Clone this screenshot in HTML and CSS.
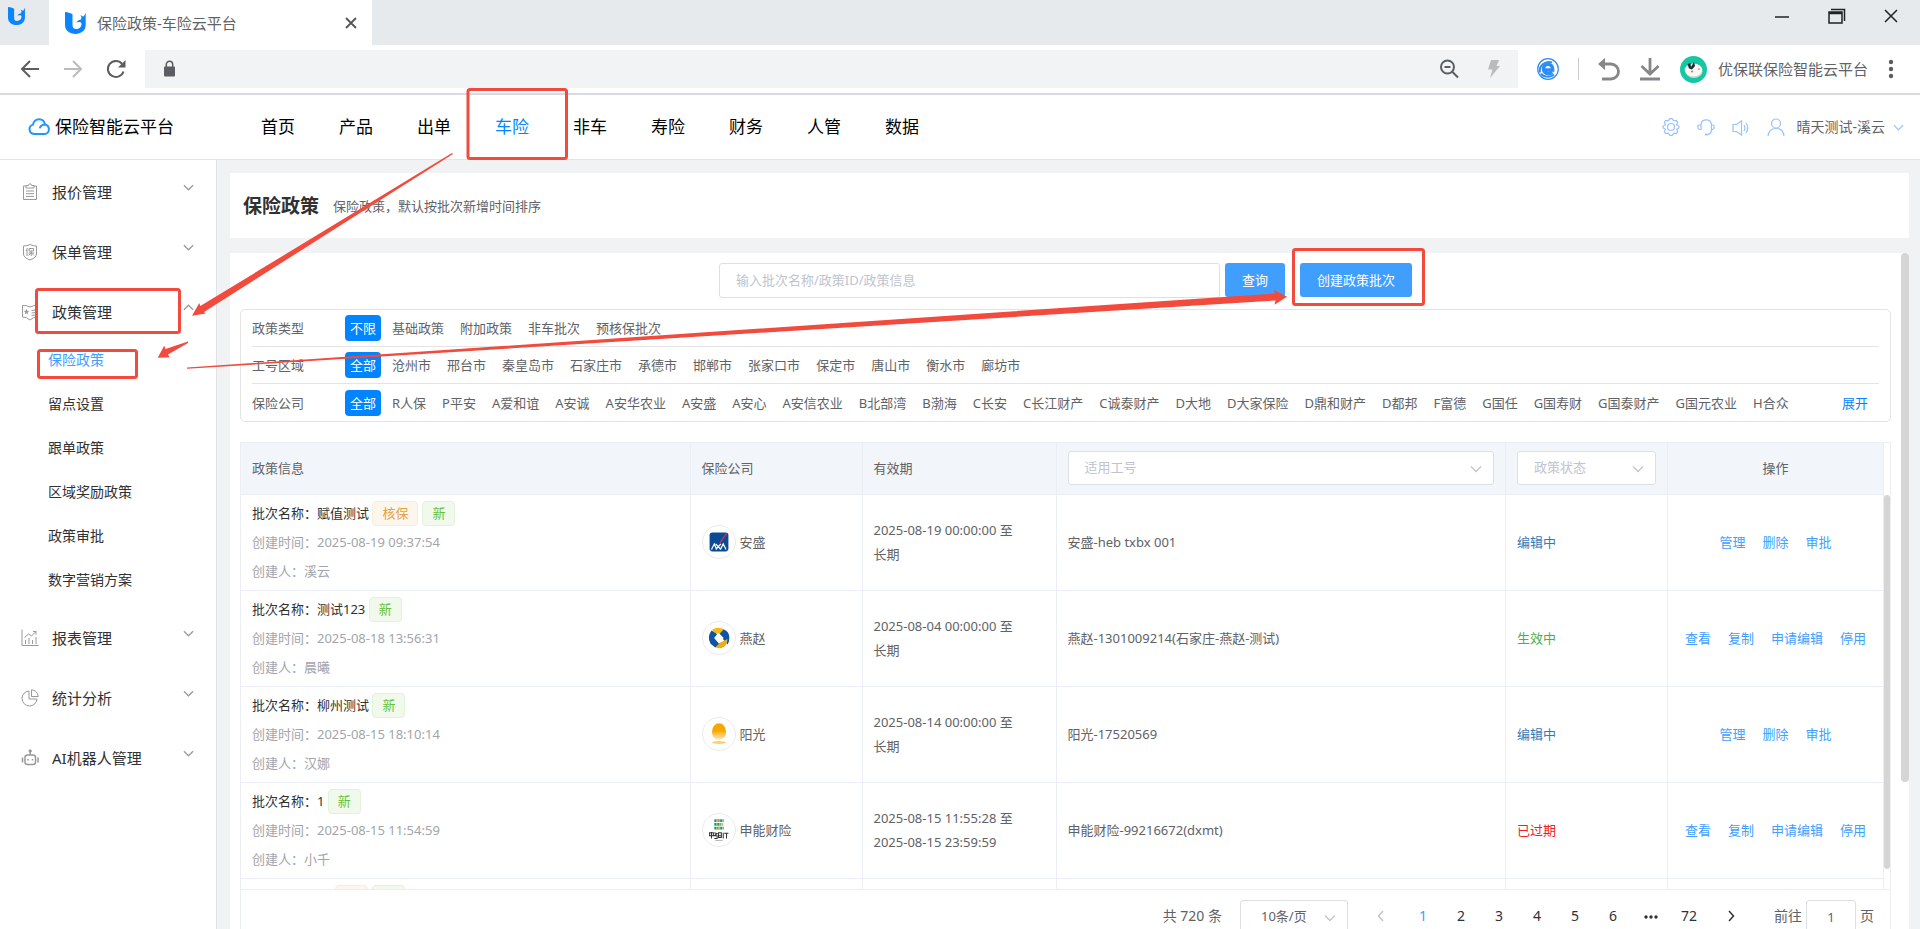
FILE: index.html
```html
<!DOCTYPE html>
<html lang="zh-CN">
  <head>
    <meta charset="UTF-8" />
    <meta name="viewport" content="width=device-width, initial-scale=1.0" />
    <title>保险政策-车险云平台</title>
    <link rel="stylesheet" href="styles.css">
  </head>
  <body>
    <!-- shared symbols -->
    <svg class="symbols" aria-hidden="true">
      <symbol id="i-brand" viewBox="0 0 22 22">
        <path fill="#0a84ff" d="M0 0c3 .3 5 .8 7.500 2.200V13c0 2.500 1.200 4 3.500 4 3 0 5.500-2 5.500-5 0-1.500-1-2-2.500-2l-2.500.5L13 8.500l3-1 .5-2L15.500 3l2 1.200 1.200.3L20.700 1v12C20.700 18.500 16 22 10.500 22 4.500 22 0 18.500 0 13z" />
      </symbol>
      <symbol id="i-down" viewBox="0 0 12 12">
        <path fill="none" stroke="currentColor" stroke-width="1.300" d="M1 3.500l5 5 5-5" />
      </symbol>
      <symbol id="i-up" viewBox="0 0 12 12">
        <path fill="none" stroke="currentColor" stroke-width="1.300" d="M1 8.500l5-5 5 5" />
      </symbol>
    </svg>

    <!-- browser frame -->
    <div class="tab-bar">
      <div class="pinned-tab">
        <svg width="18" height="18"><use href="#i-brand" /></svg>
      </div>
      <div class="tab">
        <svg width="22" height="22"><use href="#i-brand" /></svg>
        <span class="tab-title">保险政策-车险云平台</span>
        <button class="icon-btn" aria-label="关闭标签">
          <svg width="12" height="12" viewBox="0 0 12 12"><path stroke="#555" stroke-width="1.800" d="M1 1l10 10M11 1L1 11" /></svg>
        </button>
      </div>
      <div class="window-btns">
        <button class="icon-btn" aria-label="最小化">
          <svg width="16" height="16" viewBox="0 0 16 16"><path stroke="#222" stroke-width="1.500" d="M1 9h14" /></svg>
        </button>
        <button class="icon-btn" aria-label="还原">
          <svg width="18" height="16" viewBox="0 0 18 16"><path fill="none" stroke="#222" stroke-width="1.500" d="M1 4h13v11H1zM1 5.500h13M3 1.500h13.500V13" /></svg>
        </button>
        <button class="icon-btn" aria-label="关闭">
          <svg width="14" height="14" viewBox="0 0 14 14"><path stroke="#222" stroke-width="1.500" d="M1 1l12 12M13 1L1 13" /></svg>
        </button>
      </div>
    </div>

    <div class="toolbar">
      <div class="toolbar-nav">
        <button class="icon-btn" aria-label="后退">
          <svg width="20" height="20" viewBox="0 0 20 20"><path fill="none" stroke="#5a5d61" stroke-width="2" d="M19 10H3M10 2l-8 8 8 8" /></svg>
        </button>
        <button class="icon-btn" aria-label="前进">
          <svg width="20" height="20" viewBox="0 0 20 20"><path fill="none" stroke="#b9bbbd" stroke-width="2" d="M1 10h16M10 2l8 8-8 8" /></svg>
        </button>
        <button class="icon-btn" aria-label="刷新">
          <svg width="20" height="20" viewBox="0 0 20 20"><path fill="none" stroke="#5a5d61" stroke-width="2" d="M17.500 12.500A8 8 0 1 1 16 4.800" /><path fill="#5a5d61" d="M19.500 1v7.500H12z" /></svg>
        </button>
      </div>
      <div class="address">
        <svg width="20" height="18" viewBox="0 0 20 18"><rect x="5" y="6.500" width="11" height="10" rx="1" fill="#5a5d61" /><path fill="none" stroke="#5a5d61" stroke-width="1.500" d="M7.300 7V4.500a3.200 3.200 0 0 1 6.400 0V7" /></svg>
        <span class="grow"></span>
        <svg width="20" height="20" viewBox="0 0 20 20"><circle cx="8.500" cy="8" r="6.500" fill="none" stroke="#5a5d61" stroke-width="2" /><path stroke="#5a5d61" stroke-width="2" d="M13 12.500l6 6M5.500 8h6" /></svg>
        <svg width="14" height="20" viewBox="0 0 14 20"><path fill="#b9bbbd" d="M4 1h8L9.500 7H13L3 19l2.500-8.500H1z" /></svg>
      </div>
      <svg width="22" height="22" viewBox="0 0 22 22"><circle cx="11" cy="11" r="10.300" fill="#fff" stroke="#2e8df5" stroke-width="1.200" /><path fill="none" stroke="#2e8df5" stroke-width="3.400" d="M6.500 12h9.200c0-3.500-1.700-5.600-4.800-5.600-6 0-6 9.200.2 9.400 1.700 0 3-.5 4.200-1.500" /><path fill="none" stroke="#2e8df5" stroke-width="2" d="M3 14.500C1.500 8 8 2.500 15 4.500M4 15.500c2 3.500 9 4.500 13 1" /></svg>
      <span class="toolbar-line"></span>
      <button class="icon-btn" aria-label="撤销">
        <svg width="22" height="24" viewBox="0 0 22 24"><path fill="none" stroke="#85878a" stroke-width="2.800" d="M4 7h9a7.500 7.500 0 0 1 0 15H4" /><path fill="#85878a" d="M7 1v12L0 7z" /></svg>
      </button>
      <button class="icon-btn" aria-label="下载">
        <svg width="22" height="24" viewBox="0 0 22 24"><path fill="none" stroke="#85878a" stroke-width="2.800" d="M11 1v15M2.500 9l8.500 8 8.500-8M1 22h20" /></svg>
      </button>
      <svg width="27" height="27" viewBox="0 0 27 27"><circle cx="13.500" cy="13.500" r="13.500" fill="#17c6a3" /><ellipse cx="14" cy="15.500" rx="8.500" ry="6.500" fill="#b8ded6" /><ellipse cx="13.500" cy="14" rx="8.800" ry="6.500" fill="#fdf8f2" /><path fill="#1d2b33" d="M7.500 8l3-1 .5 4 3-5 1 4-3 3.500-3-1z" /><circle cx="12" cy="15.500" r="1" fill="#ee5d52" /><circle cx="19" cy="13" r="1" fill="#f49a8c" /></svg>
      <span class="account">优保联保险智能云平台</span>
      <button class="icon-btn" aria-label="菜单">
        <svg width="20" height="20" viewBox="0 0 20 20" fill="#5a5d61"><circle cx="10" cy="3" r="2.200" /><circle cx="10" cy="10" r="2.200" /><circle cx="10" cy="17" r="2.200" /></svg>
      </button>
    </div>

    <!-- app header -->
    <header class="header">
      <div class="logo">
        <svg width="22" height="18" viewBox="0 0 22 18"><path fill="none" stroke="#2196fb" stroke-width="2" stroke-linecap="round" d="M16.500 16H6a4.800 4.800 0 0 1-1-9.400C5.500 3.500 8 1.200 11 1.200c3.300 0 5.500 2.300 6 5.300 2.300.6 3.900 2.300 3.900 4.700 0 2.800-2 4.800-4.400 4.800zM12 9.500c1-2 2.800-3 5-3" /></svg>
        <span>保险智能云平台</span>
      </div>
      <nav class="main-nav">
        <a href="#">首页</a>
        <a href="#">产品</a>
        <a href="#">出单</a>
        <a href="#" class="active">车险</a>
        <a href="#">非车</a>
        <a href="#">寿险</a>
        <a href="#">财务</a>
        <a href="#">人管</a>
        <a href="#">数据</a>
      </nav>
      <div class="user-bar">
        <svg width="18" height="18" viewBox="0 0 18 18"><circle cx="9" cy="9" r="3.500" /><path d="M6.200 2.800L7.800.7h2.400l1.600 2.100 2.600-.3 1.200 1.900-1 2.400 2.300 1.200v2l-2.300 1.200 1 2.400-1.200 1.900-2.600-.3-1.600 2.100H7.800l-1.600-2.100-2.600.3-1.200-1.900 1-2.400L1.100 10V8l2.300-1.200-1-2.400 1.200-1.900z" /></svg>
        <svg width="18" height="18" viewBox="0 0 18 18"><path d="M4 12V6.500a5.300 5.300 0 0 1 10.500 0V12c0 2.500-1.500 4.300-4.500 4.500M4 7H2.500Q.8 7 .8 9t1.700 2.500H4M14.500 7h1q1.700 0 1.700 2t-1.700 2.500h-1" /><path stroke-width="2" d="M8 16.500h2.500" /></svg>
        <svg width="18" height="18" viewBox="0 0 18 18"><path d="M1 6.500h3.500L9.500 3v14l-5-3.500H1zM12 7q1.800 3 0 6M14 5q3.500 5 0 10" /></svg>
        <svg width="18" height="18" viewBox="0 0 18 18"><circle cx="9" cy="5.500" r="4.500" /><path d="M1 18c.5-4.500 3.500-7.500 8-7.500s7.500 3 8 7.500" /></svg>
        <span class="user-name">晴天测试-溪云</span>
        <svg width="11" height="11"><use href="#i-down" /></svg>
      </div>
    </header>

    <div class="layout">
      <aside class="sidebar">
        <a href="#" class="menu-item">
          <svg class="menu-icon" viewBox="0 0 18 18"><path d="M5 3H2.500v13.500h13V3H13M5 2.500h2.500Q7.500.8 9 .8t1.500 1.700H13V5H5zM5 8h8M5 10.700h8M5 13.400h8" /></svg>
          <span>报价管理</span>
          <svg class="arrow"><use href="#i-down" /></svg>
        </a>
        <a href="#" class="menu-item">
          <svg class="menu-icon" viewBox="0 0 18 18"><path d="M2.500 3Q6 3 9 1.500 12 3 15.500 3v8q0 3.500-6.500 6-6.500-2.500-6.500-6zM6.500 5L5 8M6 7v6M8 5.500h4.500v2.500H8zM7.500 10h5.500M10.200 8v5M10 10l-2.500 2.500M10.500 10l2.500 2.500" /></svg>
          <span>保单管理</span>
          <svg class="arrow"><use href="#i-down" /></svg>
        </a>
        <a href="#" class="menu-item">
          <svg class="menu-icon" viewBox="0 0 18 18"><path d="M1.500 2.500Q5 2 9 4q4-2 7.500-1.500v11.500Q12 14 9 17q-3-3-7.500-3zM10.500 7.500q2.500 0 5-1M10.500 10q2.500 0 5-1M10.500 12.500q2.500 0 5-1" /><path fill="#999" stroke="none" d="M5.500 6l.8 1.800 1.900.2-1.400 1.300.4 1.900-1.700-1-1.700 1 .4-1.900L2.800 8l1.900-.2z" /></svg>
          <span>政策管理</span>
          <svg class="arrow"><use href="#i-up" /></svg>
        </a>
        <div class="submenu">
          <a href="#" class="active">保险政策</a>
          <a href="#">留点设置</a>
          <a href="#">跟单政策</a>
          <a href="#">区域奖励政策</a>
          <a href="#">政策审批</a>
          <a href="#">数字营销方案</a>
        </div>
        <a href="#" class="menu-item">
          <svg class="menu-icon" viewBox="0 0 18 18"><path d="M1 .5v16h16.500M3.500 8.500l4-3.500 3 2L15 2.500M12 2.500h3v3M4.500 15v-4M8 15V9M11.500 15v-4M15 15V8" /></svg>
          <span>报表管理</span>
          <svg class="arrow"><use href="#i-down" /></svg>
        </a>
        <a href="#" class="menu-item">
          <svg class="menu-icon" viewBox="0 0 18 18"><path d="M8 2a7.500 7.500 0 1 0 8 8H8zM10.500.8a7 7 0 0 1 6.700 6.700h-6.700z" /></svg>
          <span>统计分析</span>
          <svg class="arrow"><use href="#i-down" /></svg>
        </a>
        <a href="#" class="menu-item">
          <svg class="menu-icon" viewBox="0 0 18 18"><rect x="4" y="6" width="10.500" height="9.500" rx="2.500" stroke-width="1.500" /><path stroke-width="1.500" d="M9.200 6V3M7 10v1.500M11.500 10v1.500M1.500 8.500v5M17 8.500v5" /><circle cx="9.200" cy="2" r="1.200" fill="#999" /></svg>
          <span>AI机器人管理</span>
          <svg class="arrow"><use href="#i-down" /></svg>
        </a>
      </aside>

      <main class="main">
        <section class="page-head">
          <h1>保险政策</h1>
          <p>保险政策，默认按批次新增时间排序</p>
        </section>

        <section class="panel">
          <form class="search">
            <input type="text" aria-label="搜索政策" placeholder="输入批次名称/政策ID/政策信息" />
            <button type="button" class="btn">查询</button>
            <button type="button" class="btn btn-create">创建政策批次</button>
          </form>

          <div class="filters">
            <div class="filter-row">
              <span class="filter-label">政策类型</span>
              <a href="#" class="on">不限</a>
              <a href="#">基础政策</a>
              <a href="#">附加政策</a>
              <a href="#">非车批次</a>
              <a href="#">预核保批次</a>
            </div>
            <div class="filter-row">
              <span class="filter-label">工号区域</span>
              <a href="#" class="on">全部</a>
              <a href="#">沧州市</a>
              <a href="#">邢台市</a>
              <a href="#">秦皇岛市</a>
              <a href="#">石家庄市</a>
              <a href="#">承德市</a>
              <a href="#">邯郸市</a>
              <a href="#">张家口市</a>
              <a href="#">保定市</a>
              <a href="#">唐山市</a>
              <a href="#">衡水市</a>
              <a href="#">廊坊市</a>
            </div>
            <div class="filter-row">
              <span class="filter-label">保险公司</span>
              <a href="#" class="on">全部</a>
              <a href="#">R人保</a>
              <a href="#">P平安</a>
              <a href="#">A爱和谊</a>
              <a href="#">A安诚</a>
              <a href="#">A安华农业</a>
              <a href="#">A安盛</a>
              <a href="#">A安心</a>
              <a href="#">A安信农业</a>
              <a href="#">B北部湾</a>
              <a href="#">B渤海</a>
              <a href="#">C长安</a>
              <a href="#">C长江财产</a>
              <a href="#">C诚泰财产</a>
              <a href="#">D大地</a>
              <a href="#">D大家保险</a>
              <a href="#">D鼎和财产</a>
              <a href="#">D都邦</a>
              <a href="#">F富德</a>
              <a href="#">G国任</a>
              <a href="#">G国寿财</a>
              <a href="#">G国泰财产</a>
              <a href="#">G国元农业</a>
              <a href="#">H合众</a>
              <a href="#" class="more">展开</a>
            </div>
          </div>

          <div class="table-box">
            <table class="head-table">
              <colgroup><col /><col class="c-company" /><col class="c-date" /><col /><col class="c-state" /><col class="c-ops" /></colgroup>
              <thead>
                <tr>
                  <th>政策信息</th>
                  <th>保险公司</th>
                  <th>有效期</th>
                  <th>
                    <div class="select">
                      <select aria-label="适用工号"><option>适用工号</option></select>
                      <svg><use href="#i-down" /></svg>
                    </div>
                  </th>
                  <th>
                    <div class="select">
                      <select aria-label="政策状态"><option>政策状态</option></select>
                      <svg><use href="#i-down" /></svg>
                    </div>
                  </th>
                  <th class="center">操作</th>
                </tr>
              </thead>
            </table>

            <div class="table-scroll">
              <table>
                <colgroup><col /><col class="c-company" /><col class="c-date" /><col /><col class="c-state" /><col class="c-ops" /></colgroup>
                <tbody>
                  <tr>
                    <td class="info">
                      <div class="batch">批次名称：赋值测试 <span class="tag tag-warn">核保</span><span class="tag">新</span></div>
                      <div>创建时间：2025-08-19 09:37:54</div>
                      <div>创建人：溪云</div>
                    </td>
                    <td>
                      <div class="company">
                        <svg class="company-logo" viewBox="0 0 34 34"><rect x="7" y="7" width="20" height="20" rx="3" fill="#0b4a94" /><path stroke="#c0355a" stroke-width="1.500" d="M18 18l7-10" /><path fill="none" stroke="#fff" stroke-width="1.300" d="M9 25l3-6 2.500 6M13.500 19l5.500 6M19 19l-5.500 6M18.500 25l3-6 3 6" /></svg>
                        安盛
                      </div>
                    </td>
                    <td>2025-08-19 00:00:00 至<br />长期</td>
                    <td>安盛-heb txbx 001</td>
                    <td class="editing">编辑中</td>
                    <td>
                      <div class="ops"><a href="#">管理</a><a href="#">删除</a><a href="#">审批</a></div>
                    </td>
                  </tr>
                  <tr>
                    <td class="info">
                      <div class="batch">批次名称：测试123 <span class="tag">新</span></div>
                      <div>创建时间：2025-08-18 13:56:31</div>
                      <div>创建人：晨曦</div>
                    </td>
                    <td>
                      <div class="company">
                        <svg class="company-logo" viewBox="0 0 34 34"><path fill="#f5b91c" d="M10 8q6-4 13 0l-1 8-5-4-6 1z" /><path fill="#0d56a6" d="M22 8q6 2 6 9 0 4-2 7l-9-11z" /><path fill="#f0ab14" d="M26 18q0 8-7 10-4 0-7-2l1-2 5-2z" /><path fill="#0d56a6" d="M9 9q-5 7-1 14l5 4 4-4-5-6 3-4z" /><path fill="#fff" d="M17 12l5 5-5 5-5-5z" /></svg>
                        燕赵
                      </div>
                    </td>
                    <td>2025-08-04 00:00:00 至<br />长期</td>
                    <td>燕赵-1301009214(石家庄-燕赵-测试)</td>
                    <td class="valid">生效中</td>
                    <td>
                      <div class="ops"><a href="#">查看</a><a href="#">复制</a><a href="#">申请编辑</a><a href="#">停用</a></div>
                    </td>
                  </tr>
                  <tr>
                    <td class="info">
                      <div class="batch">批次名称：柳州测试 <span class="tag">新</span></div>
                      <div>创建时间：2025-08-15 18:10:14</div>
                      <div>创建人：汉娜</div>
                    </td>
                    <td>
                      <div class="company">
                        <svg class="company-logo" viewBox="0 0 34 34">
                          <defs><linearGradient id="sun" x2="0" y2="1"><stop offset=".45" stop-color="#f6a800" /><stop offset="1" stop-color="#fdeccb" /></linearGradient></defs>
                          <ellipse cx="17" cy="14.500" rx="7.500" ry="9" fill="url(#sun)" /><ellipse cx="17" cy="26" rx="7.500" ry="1.500" fill="#f9cf78" />
                        </svg>
                        阳光
                      </div>
                    </td>
                    <td>2025-08-14 00:00:00 至<br />长期</td>
                    <td>阳光-17520569</td>
                    <td class="editing">编辑中</td>
                    <td>
                      <div class="ops"><a href="#">管理</a><a href="#">删除</a><a href="#">审批</a></div>
                    </td>
                  </tr>
                  <tr>
                    <td class="info">
                      <div class="batch">批次名称：1 <span class="tag">新</span></div>
                      <div>创建时间：2025-08-15 11:54:59</div>
                      <div>创建人：小千</div>
                    </td>
                    <td>
                      <div class="company">
                        <svg class="company-logo" viewBox="0 0 34 34"><path stroke="#1e9e62" stroke-width="3" stroke-dasharray="2.500 .6" d="M12 7h10M12 11h7M12 15h10" /><path stroke="#f2a65a" stroke-width="3" stroke-dasharray="2 .6" d="M19.500 11H22M14 7h3M16 15h2" /><path fill="none" stroke="#333" stroke-width="1.100" d="M7 20h4v3H7zM9 19v7M12 20l3 1-3 2h3v3h-3M16.500 20v5h3v-5zM21.500 20v6M22.500 20.500h4.500M25 20v6M16.500 23h3" /><path stroke="#aaa" d="M13 28h8" /></svg>
                        申能财险
                      </div>
                    </td>
                    <td>2025-08-15 11:55:28 至<br />2025-08-15 23:59:59</td>
                    <td>申能财险-99216672(dxmt)</td>
                    <td class="expired">已过期</td>
                    <td>
                      <div class="ops"><a href="#">查看</a><a href="#">复制</a><a href="#">申请编辑</a><a href="#">停用</a></div>
                    </td>
                  </tr>
                  <tr>
                    <td class="info">
                      <div class="batch">批次名称：12 <span class="tag tag-warn">核</span><span class="tag">新</span></div>
                      <div>&nbsp;</div>
                      <div>&nbsp;</div>
                    </td>
                    <td></td>
                    <td></td>
                    <td></td>
                    <td></td>
                    <td></td>
                  </tr>
                </tbody>
              </table>
              <span class="table-thumb"></span>
            </div>
          </div>

          <div class="pagination">
            <span class="total">共 720 条</span>
            <div class="select page-size">
              <select aria-label="每页条数"><option>10条/页</option></select>
              <svg><use href="#i-down" /></svg>
            </div>
            <button class="page-btn" aria-label="上一页" disabled>
              <svg width="12" height="12" viewBox="0 0 12 12"><path fill="none" stroke="currentColor" stroke-width="1.500" d="M8 1L3.500 6 8 11" /></svg>
            </button>
            <ul class="pager">
              <li><a href="#" class="active">1</a></li>
              <li><a href="#">2</a></li>
              <li><a href="#">3</a></li>
              <li><a href="#">4</a></li>
              <li><a href="#">5</a></li>
              <li><a href="#">6</a></li>
              <li><svg width="14" height="14" viewBox="0 0 14 14" fill="#303133"><circle cx="2" cy="8" r="1.700" /><circle cx="7" cy="8" r="1.700" /><circle cx="12" cy="8" r="1.700" /></svg></li>
              <li><a href="#">72</a></li>
            </ul>
            <button class="page-btn" aria-label="下一页">
              <svg width="12" height="12" viewBox="0 0 12 12"><path fill="none" stroke="currentColor" stroke-width="1.500" d="M4 1l4.500 5L4 11" /></svg>
            </button>
            <label class="jump">前往 <input type="text" value="1" /> 页</label>
          </div>
          <span class="panel-thumb"></span>
        </section>
      </main>
    </div>

    <!-- step markers drawn over the page -->
    <svg class="marks" width="1920" height="929" viewBox="0 0 1920 929" aria-hidden="true">
      <g fill="none" stroke="#f24a3d" stroke-width="3">
        <rect x="468" y="89.500" width="98.500" height="69" rx="2" />
        <rect x="36.500" y="289.500" width="143" height="43" rx="2" />
        <rect x="38.500" y="350.500" width="98" height="27" rx="2" />
        <rect x="1293.500" y="249.500" width="130" height="55" rx="2" />
      </g>
      <g fill="#f24a3d">
        <path d="M452 153l1 1-249 158 1.700 1.500L192 315.700l7.300-12.700 1 3z" />
        <path d="M188 341.500v1.500l-20 11.500 1.700 2.800-12 .5 6.500-12 1.300 3.200z" />
        <path d="M187 367.500L1275 293.500l-1-3.700 13 7-12.500 8 1-4.300L187 368.700z" />
      </g>
    </svg>
  </body>
</html>
```
FILE: styles.css
```css
* {
  box-sizing: border-box;
}

body {
  margin: 0;
  height: 100vh;
  overflow: hidden;
  display: flex;
  flex-direction: column;
  position: relative;
  background: #fff;
  color: #606266;
  font-family: "Noto Sans", "Noto Sans CJK SC", sans-serif;
  font-size: 13px;
  line-height: 24px;
}

a {
  color: inherit;
  text-decoration: none;
}

button,
input,
select {
  font-family: inherit;
  font-size: 13px;
}

svg {
  flex: none;
  display: block;
}

.symbols {
  position: absolute;
  width: 0;
  height: 0;
}

.grow {
  flex: 1;
}

.icon-btn {
  display: flex;
  padding: 0;
  border: none;
  background: none;
  cursor: pointer;
}

/* browser frame */
.tab-bar {
  display: flex;
  height: 45px;
  flex: none;
  background: #e6eaed;
}

.pinned-tab {
  width: 49px;
  padding: 7px 8px;
}

.tab {
  display: flex;
  align-items: center;
  width: 323px;
  padding: 0 15px 0 16px;
  background: #fff;
}

.tab-title {
  flex: 1;
  margin-left: 10px;
  font-size: 15px;
  color: #5f6266;
}

.window-btns {
  display: flex;
  align-items: center;
  gap: 38px;
  height: 32px;
  margin-left: auto;
  padding-right: 22px;
}

.toolbar {
  display: flex;
  align-items: center;
  gap: 19px;
  height: 50px;
  flex: none;
  padding: 0 19px 0 20px;
  border-bottom: 2px solid #dadae0;
}

.toolbar-nav {
  display: flex;
  gap: 23px;
}

.address {
  flex: 1;
  display: flex;
  align-items: center;
  gap: 28px;
  height: 38px;
  padding: 0 17px 0 14px;
  background: #f1f3f4;
}

.toolbar-line {
  width: 1px;
  height: 22px;
  background: #c8cacd;
}

.account {
  margin-left: -8px;
  margin-right: -6px;
  font-size: 15px;
}

/* header */
.header {
  display: flex;
  align-items: center;
  height: 65px;
  flex: none;
  padding: 0 16px 0 28px;
  border-bottom: 1px solid #e4e4e4;
  color: #000;
}

.logo {
  display: flex;
  align-items: center;
  gap: 5px;
  width: 233px;
  font-size: 17px;
}

.main-nav {
  display: flex;
  flex: 1;
  gap: 44px;
  font-size: 17px;
}

.main-nav .active {
  color: #0084ff;
}

.user-bar {
  display: flex;
  align-items: center;
  gap: 17px;
  color: #a0c8ff;
}

.user-bar svg {
  fill: none;
  stroke: #96c2ff;
  stroke-width: 1.2;
}

.user-name {
  margin: 0 -9px 0 -6px;
  font-size: 14px;
  color: #606266;
}

.layout {
  display: flex;
  flex: 1;
  min-height: 0;
}

/* sidebar */
.sidebar {
  width: 217px;
  flex: none;
  padding-top: 2px;
  border-right: 1px solid #e0e2e5;
  color: #303133;
}

.menu-item {
  display: flex;
  align-items: center;
  height: 60px;
  padding: 0 22px 0 21px;
  font-size: 15px;
}

.menu-item span {
  flex: 1;
  margin-left: 13px;
}

.menu-icon {
  width: 18px;
  height: 18px;
  fill: none;
  stroke: #999;
}

.arrow {
  width: 11px;
  height: 11px;
  margin-bottom: 10px;
  color: #999;
}

.submenu {
  display: flex;
  flex-direction: column;
  gap: 8px;
  padding: 0 0 10px 48px;
  font-size: 14px;
  line-height: 36px;
}

.submenu .active {
  color: #409eff;
}

/* content */
.main {
  flex: 1;
  min-width: 0;
  display: flex;
  flex-direction: column;
  gap: 15px;
  padding: 13px 11px 0 13px;
  background: #f1f2f4;
}

.page-head {
  display: flex;
  align-items: center;
  gap: 14px;
  height: 65px;
  flex: none;
  padding: 0 13px;
  background: #fff;
}

.page-head h1 {
  margin: 0;
  font-size: 19px;
  color: #303133;
}

.page-head p {
  margin: 0;
}

.panel {
  position: relative;
  flex: 1;
  min-height: 0;
  overflow: hidden;
  padding: 10px 18px 0 10px;
  background: #fff;
}

.panel-thumb,
.table-thumb {
  position: absolute;
  top: 0;
  right: 0;
  border-radius: 4px;
  background: #d5d5d5;
}

.panel-thumb {
  width: 8px;
  height: 529px;
}

.table-thumb {
  width: 6px;
  height: 374px;
}

.search {
  display: flex;
  justify-content: center;
  gap: 5px;
  margin-bottom: 11px;
}

.search input {
  width: 501px;
  height: 35px;
  padding: 0 16px 2px;
  border: 1px solid #dcdfe6;
  border-radius: 3px;
}

.search input::placeholder {
  color: #c0c4cc;
}

.btn {
  height: 34px;
  padding: 0 17px 2px;
  border: none;
  border-radius: 3px;
  background: #409eff;
  color: #fff;
  cursor: pointer;
}

.btn-create {
  margin-left: 10px;
}

.filters {
  margin-bottom: 20px;
  padding: 0 11px;
  border: 1px solid #e4e4e4;
  border-radius: 5px;
}

.filter-row {
  display: flex;
  align-items: center;
  gap: 6px;
  height: 37px;
  border-bottom: 1px solid #e4e4e4;
}

.filter-row:last-child {
  border-bottom: none;
}

.filter-label {
  width: 87px;
}

.filter-row a {
  padding: 0 5px;
  line-height: 26px;
  white-space: nowrap;
}

.filter-row .on {
  border-radius: 4px;
  background: #0084ff;
  color: #fff;
}

.filter-row .more {
  margin-left: auto;
  margin-right: 6px;
  color: #0084ff;
}

/* table */
.table-box {
  border: 1px solid #ebeef5;
  border-bottom: none;
}

table {
  width: 100%;
  table-layout: fixed;
  border-collapse: separate;
  border-spacing: 0;
}

.c-company {
  width: 172px;
}

.c-date {
  width: 194px;
}

.c-state {
  width: 162px;
}

.c-ops {
  width: 216px;
}

th,
td {
  padding: 0 11px;
  border-right: 1px solid #ebeef5;
  border-bottom: 1px solid #ebeef5;
  text-align: left;
  font-weight: normal;
}

th {
  height: 52px;
  padding-bottom: 2px;
  background: #f2f5fa;
}

.center {
  text-align: center;
}

.head-table {
  width: calc(100% - 6px);
}

.table-scroll {
  position: relative;
  height: 394px;
  padding-right: 6px;
  overflow: hidden;
}

td {
  height: 96px;
  padding-bottom: 2px;
}

.info {
  padding-bottom: 0;
  color: #a2a5aa;
  line-height: 29px;
}

.batch {
  color: #303133;
}

.tag {
  display: inline-block;
  height: 25px;
  margin-right: 4px;
  padding: 0 9px;
  border: 1px solid #e1f3d8;
  border-radius: 4px;
  background: #f0f9eb;
  color: #67c23a;
  line-height: 23px;
}

.tag-warn {
  border-color: #faecd8;
  background: #fdf6ec;
  color: #e6a23c;
}

.company {
  display: flex;
  align-items: center;
  gap: 4px;
}

.company-logo {
  width: 34px;
  height: 34px;
  border: 1px solid #ebebeb;
  border-radius: 50%;
}

.editing {
  color: #337ab7;
}

.valid {
  color: #4cae4c;
}

.expired {
  color: #f02020;
}

.ops {
  display: flex;
  justify-content: center;
  gap: 17px;
  margin: 0 -11px;
  color: #409eff;
}

.select {
  position: relative;
}

.select select {
  display: block;
  width: 100%;
  height: 34px;
  padding: 0 16px 1px;
  border: 1px solid #dcdfe6;
  border-radius: 3px;
  background: #fff;
  color: #c0c4cc;
  appearance: none;
}

.select svg {
  position: absolute;
  top: 12px;
  right: 12px;
  width: 12px;
  height: 12px;
  color: #c0c4cc;
  pointer-events: none;
}

/* pagination */
.pagination {
  display: flex;
  justify-content: flex-end;
  padding: 10px 16px 20px;
  border: 1px solid #ebeef5;
  font-size: 14px;
  line-height: 32px;
}

.page-size {
  width: 108px;
  margin: 0 10px 0 18px;
}

.page-size select {
  padding: 0 20px 2px;
  color: #606266;
}

.page-btn {
  display: flex;
  align-items: center;
  justify-content: center;
  width: 46px;
  height: 32px;
  padding: 0;
  border: none;
  background: none;
  color: #303133;
}

.page-btn:disabled {
  color: #c0c4cc;
}

.pager {
  display: flex;
  margin: 0;
  padding: 0;
  list-style: none;
  color: #303133;
}

.pager li {
  display: flex;
  align-items: center;
  justify-content: center;
  width: 38px;
  height: 32px;
}

.pager .active {
  color: #409eff;
}

.jump {
  display: flex;
  gap: 4px;
  margin-left: 20px;
}

.jump input {
  width: 50px;
  height: 34px;
  border: 1px solid #dcdfe6;
  border-radius: 3px;
  color: #606266;
  text-align: center;
}

.marks {
  position: absolute;
  top: 0;
  left: 0;
  pointer-events: none;
}
```
